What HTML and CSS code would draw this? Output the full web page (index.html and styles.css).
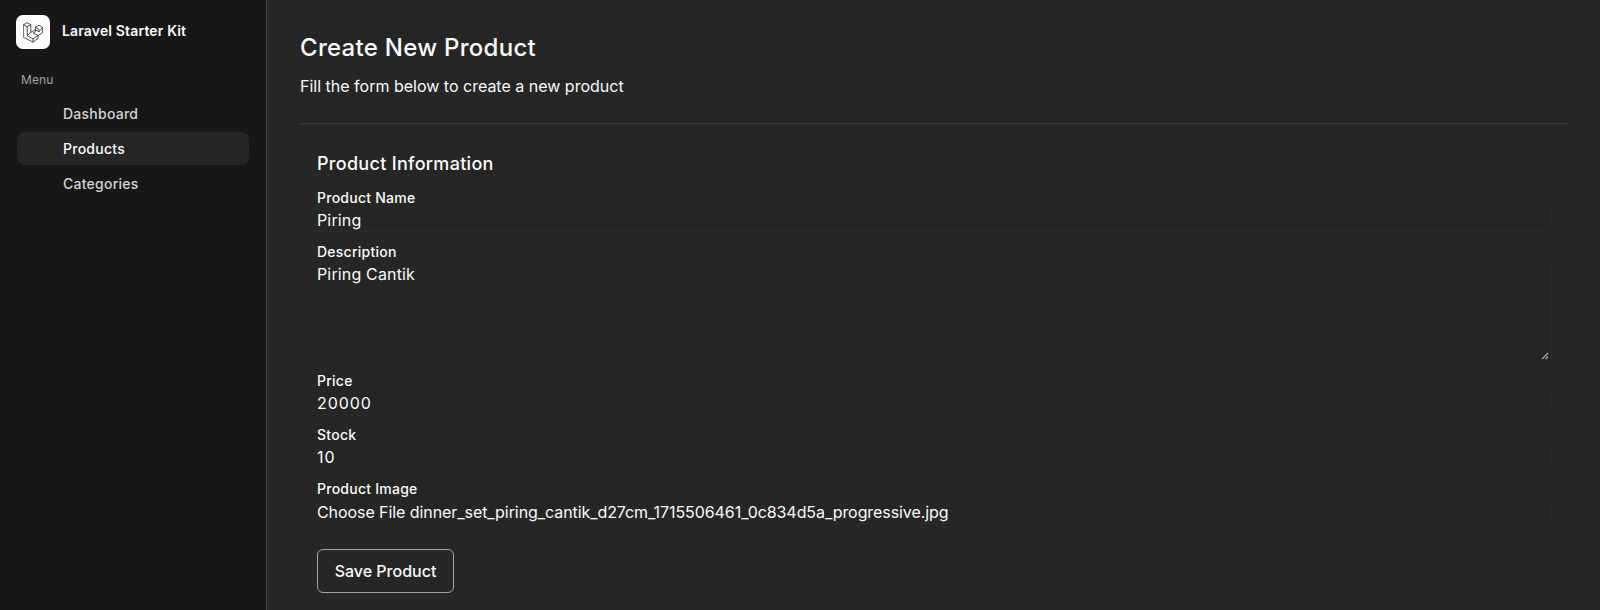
FILE: index.html
```html
<!DOCTYPE html>
<html lang="en">
<head>
<meta charset="utf-8">
<title>Create New Product</title>
<link rel="stylesheet" href="styles.css">
</head>
<body>
<div class="app">
  <aside class="sidebar">
    <div class="brand">
      <span class="logo">
        <svg class="logo-mark" viewBox="0 0 50 52" width="20" height="21" fill="none" stroke="#262626" stroke-width="2" stroke-linejoin="round" stroke-linecap="round">
          <path d="M1.500 6.500 10.500 1.500 19.500 6.500V25.500L31 19V13L40 8 49 13V27L37.500 33.500V41L25 50 1.500 38z"/>
          <path d="M1.500 6.500 10.500 12 19.500 6.500M10.500 12V34L25 42 37.500 33.500 25 27 31 24V19L40 24 49 13M31 13 40 18V24M25 42V50M10.500 34 19.500 25.500"/>
        </svg>
      </span>
      <span class="brand-name">Laravel Starter Kit</span>
    </div>
    <div class="menu-label">Menu</div>
    <nav class="nav">
      <a class="nav-item">Dashboard</a>
      <a class="nav-item active">Products</a>
      <a class="nav-item">Categories</a>
    </nav>
  </aside>
  <main class="main">
    <header class="page-head">
      <h1 class="title">Create New Product</h1>
      <p class="subtitle">Fill the form below to create a new product</p>
    </header>
    <form class="card">
      <h2 class="card-title">Product Information</h2>
      <div class="field">
        <label class="label">Product Name</label>
        <div class="input">Piring</div>
      </div>
      <div class="field field-tall">
        <label class="label">Description</label>
        <div class="input textarea">Piring Cantik
          <svg class="grip" viewBox="0 0 8 8" width="8" height="8"><path d="M1 7 7 1M4.500 7 7 4.500" stroke="#a8a8a8" stroke-width="1.200" fill="none"/></svg>
        </div>
      </div>
      <div class="field">
        <label class="label">Price</label>
        <div class="input number">20000</div>
      </div>
      <div class="field">
        <label class="label">Stock</label>
        <div class="input number">10</div>
      </div>
      <div class="field field-file">
        <label class="label">Product Image</label>
        <div class="input file">Choose File dinner_set_piring_cantik_d27cm_1715506461_0c834d5a_progressive.jpg</div>
      </div>
      <button class="save" type="button">Save Product</button>
    </form>
  </main>
</div>
</body>
</html>
```
FILE: styles.css
```css
* { box-sizing: border-box; }
html, body { margin: 0; height: 100%; }
body {
  background: #262626;
  color: #fafafa;
  font-family: Inter, "Liberation Sans", sans-serif;
  overflow: hidden;
}
.app { display: flex; height: 610px; }
.sidebar {
  width: 267px;
  flex: none;
  background: #171717;
  border-right: 1px solid #404040;
  padding: 15px 16px 0;
}
.brand { display: flex; align-items: center; gap: 12px; height: 34px; }
.logo {
  width: 34px; height: 34px;
  background: #fff;
  border-radius: 7px;
  display: flex; align-items: center; justify-content: center;
}
.brand-name { margin-bottom: 4px; font-size: 14px; font-weight: 600; letter-spacing: 0.15px; color: #fafafa; }
.menu-label { margin: 15px 0 0 5px; height: 32px; line-height: 32px; font-size: 12px; color: #a3a3a3; letter-spacing: 0.08px; }
.nav { display: flex; flex-direction: column; gap: 2px; width: 232px; margin: 0.5px 0 0 1px; }
.nav-item {
  height: 33px;
  line-height: 33px;
  padding-left: 46px;
  font-size: 14px;
  font-weight: 500;
  letter-spacing: 0.25px;
  color: #d4d4d4;
  border-radius: 8px;
}
.nav-item.active { background: #262626; color: #fafafa; }
.main { flex: 1; padding: 32px 32px 0 33px; min-width: 0; }
.page-head { height: 92px; border-bottom: 1px solid #3a3a3a; }
.title { margin: 0; font-size: 24px; line-height: 32px; font-weight: 500; letter-spacing: 0.28px; }
.subtitle { margin: 10px 0 0; font-size: 16px; line-height: 24px; }
.card { padding: 28px 16px 0 17px; }
.card-title { margin: 0 0 12px; font-size: 18px; line-height: 24px; font-weight: 500; letter-spacing: 0.3px; }
.field { margin-bottom: 10px; }
.field-tall { margin-bottom: 9px; }
.field-file { margin-bottom: 9px; }
.label { display: block; font-size: 14px; line-height: 20px; font-weight: 500; letter-spacing: 0.25px; }
.input {
  position: relative;
  height: 24px;
  font-size: 16px;
  line-height: 24px;
  letter-spacing: 0.15px;
  border-bottom: 1px solid #2b2b2b;
  border-right: 1px solid #2b2b2b;
  border-radius: 0 0 6px 0;
}
.number { letter-spacing: 0.9px; }
.file { height: 25px; padding-top: 1px; letter-spacing: -0.07px; }
.textarea { height: 100px; }
.grip { position: absolute; right: 2px; bottom: 1px; }
.save {
  display: block;
  margin-top: 25px;
  width: 137px; height: 44px;
  background: transparent;
  color: #fafafa;
  border: 1px solid #a3a3a3;
  border-radius: 6px;
  font: 500 16px Inter, "Liberation Sans", sans-serif;
  padding: 0;
}
```
